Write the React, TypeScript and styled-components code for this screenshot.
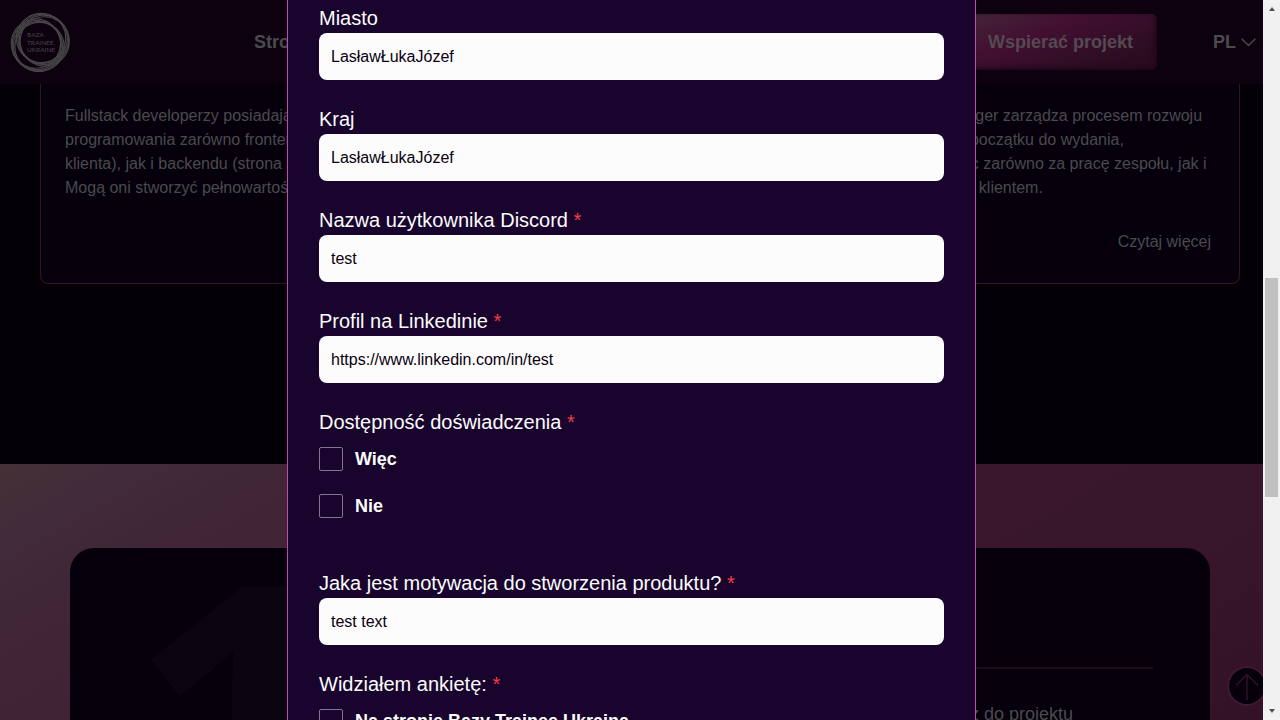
import React from "react";
import styled, { createGlobalStyle } from "styled-components";

const GlobalStyle = createGlobalStyle`
  *, *::before, *::after { box-sizing: border-box; }
  body {
    margin: 0;
    background: #030006;
    color: #4b4a4c;
    font-family: "Liberation Sans", Arial, sans-serif;
    font-size: 16px;
    line-height: 24px;
  }
  p { margin: 0; }
  a { color: inherit; text-decoration: none; }
`;

const Screen = styled.div`
  position: relative;
  height: 100vh;
  overflow: hidden;
`;

const Header = styled.header`
  display: flex;
  align-items: center;
  height: 84px;
  padding: 0 24px 0 10px;
  background: #0e010f;
  font-size: 18px;
  font-weight: 700;
`;

const Nav = styled.nav`
  display: flex;
  flex: 1;
  gap: 40px;
  margin-left: 184px;
`;

const Actions = styled.div`
  display: flex;
  align-items: center;
  gap: 56px;
`;

const SupportButton = styled.button`
  height: 56px;
  padding: 0 24px;
  border: 0;
  border-radius: 6px;
  background: linear-gradient(160deg, #43263a 0%, #430f31 36%, #2b0d22 80%, #2a0b20 100%);
  box-shadow: inset -2px -2px 5px #1d0619;
  color: #544a51;
  font: inherit;
`;

const LanguageButton = styled.button`
  display: flex;
  align-items: center;
  gap: 5px;
  padding: 0;
  border: 0;
  background: none;
  color: #4b4a4c;
  font: inherit;
`;

const Roles = styled.section`
  display: grid;
  grid-template-columns: repeat(3, 1fr);
  gap: 24px;
  max-width: 1280px;
  margin: 0 auto;
  padding: 0 40px 180px;
`;

const RoleCard = styled.article`
  display: flex;
  flex-direction: column;
  justify-content: space-between;
  height: 200px;
  padding: 20px 24px 29px;
  border: 1px solid #351229;
  border-top: 0;
  border-radius: 0 0 8px 8px;
  background: #05000c;
  white-space: nowrap;
`;

const MoreLink = styled.a`
  align-self: flex-end;
  padding-right: 4px;
`;

const Steps = styled.section`
  padding: 84px 70px;
  background: linear-gradient(150deg, #443036 0%, #422b3a 6%, #402636 13%, #402436 20%, #3a172d 42%, #37152a 60%, #331228 74%, #2f1025 100%);
`;

const StepsCard = styled.div`
  display: flex;
  justify-content: space-between;
  max-width: 1140px;
  height: 420px;
  margin: 0 auto;
  padding: 0 57px;
  border-radius: 24px;
  background: #05000c;
  overflow: hidden;
`;

const StepNumber = styled.span`
  color: #0b0511;
  font-family: "Open Sans", sans-serif;
  font-size: 400px;
  font-weight: 700;
  line-height: 338px;
`;

const StepText = styled.div`
  width: 484px;
  padding-top: 119px;
  font-size: 18px;
`;

const StepRule = styled.hr`
  height: 2px;
  margin: 0 0 33px;
  border: 0;
  background: #210a20;
`;

const BackToTop = styled.a`
  position: absolute;
  right: 13px;
  bottom: 14px;
  width: 40px;
  height: 40px;
`;

const Backdrop = styled.div`
  position: absolute;
  inset: 0 17px 0 0;
  display: flex;
  justify-content: center;
`;

const Dialog = styled.form`
  width: 689px;
  padding: 6px 31px 0;
  border: solid #c04aa8;
  border-width: 0 1px;
  background: #18042d;
  color: #fcfcfc;
  overflow: hidden;
`;

const Field = styled.div`
  display: flex;
  flex-direction: column;
  gap: 3px;
  margin-bottom: 27px;
`;

const FieldLabel = styled.label`
  font-size: 20px;
  line-height: 24px;
`;

const Required = styled.span`
  color: #f53b49;
`;

const TextInput = styled.input`
  height: 47px;
  padding: 0 12px;
  border: 0;
  border-radius: 8px;
  outline: 0;
  background: #fcfcfc;
  color: #0a0010;
  font: inherit;
`;

const Group = styled.fieldset`
  min-width: 0;
  margin: 0 0 53px;
  padding: 0;
  border: 0;
`;

const GroupTitle = styled.legend`
  margin-bottom: 13px;
  padding: 0;
  font-size: 20px;
  line-height: 24px;
`;

const Options = styled.div`
  display: flex;
  flex-direction: column;
  gap: 23px;
`;

const Option = styled.label`
  display: flex;
  align-items: center;
  gap: 12px;
  font-size: 18px;
  font-weight: 700;
`;

const Checkbox = styled.input`
  appearance: none;
  width: 24px;
  height: 24px;
  margin: 0;
  border: 1px solid #82768a;
  border-radius: 2px;
`;

const Scrollbar = styled.div`
  position: absolute;
  inset: 0 0 0 auto;
  display: flex;
  flex-direction: column;
  align-items: center;
  width: 17px;
  background: #f1f1f1;
`;

const ScrollArrow = styled.svg`
  flex: none;
  width: 17px;
  height: 17px;
  fill: #505050;
`;

const Track = styled.div`
  display: grid;
  flex: 1;
  grid-template-rows: 261fr 219fr 206fr;
  width: 13px;
`;

const Thumb = styled.div`
  grid-row: 2;
  background: #c1c1c1;
`;

const RING_ANGLES = [-80, -58, -36, -14, 100, 122, 144, 166];

function Logo() {
  return (
    <svg width="60" height="60" viewBox="0 0 60 60" role="img" aria-label="Baza Trainee Ukraine">
      <g fill="none" stroke="#474548" strokeWidth="1.2">
        {RING_ANGLES.map((angle) => (
          <circle key={angle} cx="34.8" cy="30.5" r="24.6" transform={`rotate(${angle} 30.3 30.5)`} />
        ))}
      </g>
      <g fill="#474548" fontFamily="Lato, sans-serif" fontSize="6.5" fontWeight="400">
        <text x="17" y="24.5">BAZA</text>
        <text x="17" y="32.5">TRAINEE</text>
        <text x="17" y="40">UKRAINE</text>
      </g>
    </svg>
  );
}

function TextField(props: { id: string; label: string; value: string; required?: boolean }) {
  return (
    <Field>
      <FieldLabel htmlFor={props.id}>
        {props.label} {props.required && <Required>*</Required>}
      </FieldLabel>
      <TextInput id={props.id} defaultValue={props.value} />
    </Field>
  );
}

function CheckGroup(props: { title: string; options: string[] }) {
  return (
    <Group>
      <GroupTitle>
        {props.title} <Required>*</Required>
      </GroupTitle>
      <Options>
        {props.options.map((option) => (
          <Option key={option}>
            <Checkbox type="checkbox" />
            {option}
          </Option>
        ))}
      </Options>
    </Group>
  );
}

export default function App() {
  return (
    <Screen>
      <GlobalStyle />
      <Header>
        <Logo />
        <Nav>
          <a href="#home">Strona</a>
        </Nav>
        <Actions>
          <SupportButton type="button">Wspierać projekt</SupportButton>
          <LanguageButton type="button">
            PL
            <svg width="15" height="10" viewBox="0 0 15 10" fill="none" stroke="#4b4a4c" strokeWidth="1.4">
              <path d="M0.7 1.7 L7.5 8.5 L14.3 1.7" />
            </svg>
          </LanguageButton>
        </Actions>
      </Header>
      <main>
        <Roles>
          <RoleCard>
            <p>
              Fullstack developerzy posiadają
              <br />
              programowania zarówno frontend
              <br />
              klienta), jak i backendu (strona
              <br />
              Mogą oni stworzyć pełnowartościowy
            </p>
          </RoleCard>
          <RoleCard />
          <RoleCard>
            <p>
              Project Manager zarządza procesem rozwoju
              <br />
              produktu od początku do wydania,
              <br />
              odpowiadając zarówno za pracę zespołu, jak i
              <br />
              współpracę z klientem.
            </p>
            <MoreLink href="#project-manager">Czytaj więcej</MoreLink>
          </RoleCard>
        </Roles>
        <Steps>
          <StepsCard>
            <StepNumber>1</StepNumber>
            <StepText>
              <StepRule />
              <p>Wypełnij ankietę zgłoszeniową i dołącz do projektu</p>
            </StepText>
          </StepsCard>
        </Steps>
      </main>
      <BackToTop href="#top" aria-label="Do góry">
        <svg width="40" height="40" viewBox="0 0 40 40" fill="none" stroke="#451a3b">
          <circle cx="20" cy="20" r="18.8" fill="#05000c" strokeWidth="1.6" />
          <path d="M20 34 V8.5 M9 19.5 L20 8.5 L31 19.5" stroke="#330f2d" strokeWidth="1.5" />
        </svg>
      </BackToTop>
      <Backdrop>
        <Dialog aria-label="Ankieta">
          <TextField id="city" label="Miasto" value="LasławŁukaJózef" />
          <TextField id="country" label="Kraj" value="LasławŁukaJózef" />
          <TextField id="discord" label="Nazwa użytkownika Discord" value="test" required />
          <TextField id="linkedin" label="Profil na Linkedinie" value="https://www.linkedin.com/in/test" required />
          <CheckGroup title="Dostępność doświadczenia" options={["Więc", "Nie"]} />
          <TextField id="motivation" label="Jaka jest motywacja do stworzenia produktu?" value="test text" required />
          <CheckGroup title="Widziałem ankietę:" options={["Na stronie Bazy Trainee Ukraina"]} />
        </Dialog>
      </Backdrop>
      <Scrollbar aria-hidden="true">
        <ScrollArrow viewBox="0 0 17 17">
          <path d="M6 11 L9 7 L12 11 Z" />
        </ScrollArrow>
        <Track>
          <Thumb />
        </Track>
        <ScrollArrow viewBox="0 0 17 17">
          <path d="M6 6 L9 10 L12 6 Z" />
        </ScrollArrow>
      </Scrollbar>
    </Screen>
  );
}
